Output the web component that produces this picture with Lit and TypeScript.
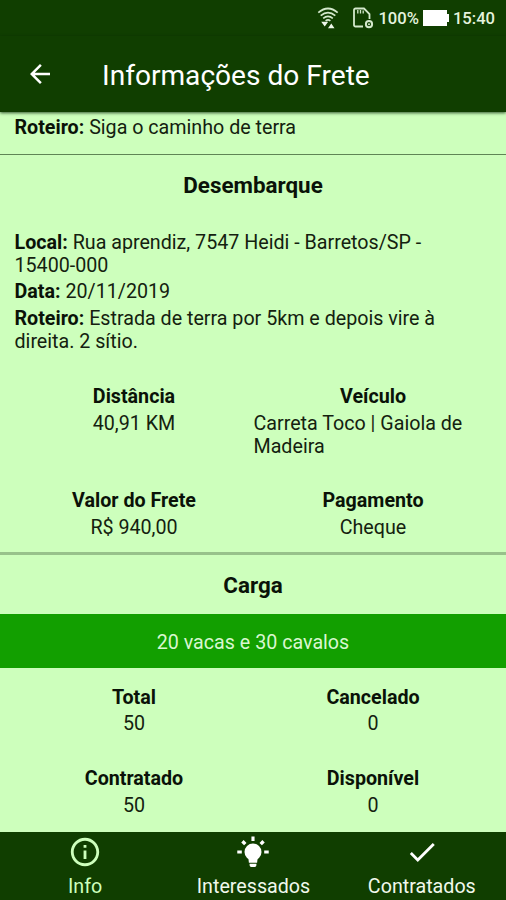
import { LitElement, html, css, svg } from "lit";
import { customElement } from "lit/decorators.js";

interface Fact {
  title: string;
  value: string;
}

const TRIP: Fact[] = [
  { title: "Distância", value: "40,91 KM" },
  { title: "Veículo", value: "Carreta Toco | Gaiola de Madeira" },
  { title: "Valor do Frete", value: "R$ 940,00" },
  { title: "Pagamento", value: "Cheque" },
];

const CARGO: Fact[] = [
  { title: "Total", value: "50" },
  { title: "Cancelado", value: "0" },
  { title: "Contratado", value: "50" },
  { title: "Disponível", value: "0" },
];

const infoIcon = svg`<path d="M11 17h2v-6h-2v6zm1-15C6.48 2 2 6.48 2 12s4.48 10 10 10 10-4.48 10-10S17.52 2 12 2zm0 18c-4.41 0-8-3.59-8-8s3.59-8 8-8 8 3.59 8 8-3.59 8-8 8zM11 9h2V7h-2v2z"/>`;
const bulbIcon = svg`<circle cx="12" cy="12" r="6"/><path d="M8.6 15h6.8l-.5 4.500H9.100zM9.600 20.300h4.800v1.100a1.200 1.200 0 0 1-1.200 1.200h-2.400a1.200 1.200 0 0 1-1.200-1.200zM10.900 1h2.200v3.200h-2.200zM.9 10.900h3.200v2.200H.9zM19.900 10.900h3.200v2.200h-3.200zM3.700 5.300l1.700-1.700 2 2-1.700 1.700zM20.300 5.300l-1.700-1.700-2 2 1.700 1.700z"/>`;
const checkIcon = svg`<path d="M9 16.17L4.83 12l-1.42 1.41L9 19 21 7l-1.41-1.41z"/>`;

const TABS = [
  { label: "Info", icon: infoIcon, active: true },
  { label: "Interessados", icon: bulbIcon, active: false },
  { label: "Contratados", icon: checkIcon, active: false },
];

@customElement("app-root")
export class AppRoot extends LitElement {
  static styles = css`
    :host {
      display: flex;
      flex-direction: column;
      width: 506px;
      height: 900px;
      overflow: hidden;
      background: #cdffbc;
      color: #14210f;
      font: 400 19.68px/23px Roboto, sans-serif;
    }
    svg { display: block; }
    .status {
      display: flex;
      align-items: center;
      justify-content: flex-end;
      height: 36px;
      padding-right: 11px;
      background: #103e00;
      color: #e4f3de;
      font-size: 16.6px;
      font-weight: 500;
    }
    .wifi { margin: 0 13px 0 0; }
    .card { margin-right: 4px; }
    .battery { margin: 0 4px; }
    .bar {
      display: flex;
      align-items: center;
      height: 76px;
      padding: 0 25px;
      gap: 47px;
      background: #103e00;
      color: #fff;
      box-shadow: 0 1px 3px rgba(0, 30, 0, 0.75);
    }
    .title {
      font-size: 28.1px;
      line-height: 32px;
      font-weight: 400;
      margin: 4px 0 0;
    }
    .content { flex: 1; display: flex; flex-direction: column; }
    .para { margin: 0; padding: 0 14.5px; }
    .first { padding-top: 3.5px; height: 23px; margin-bottom: 15px; }
    .place { display: flex; flex-direction: column; gap: 3.6px; padding-top: 15.5px; }
    .zip { white-space: nowrap; }
    b, .name { font-weight: 700; color: #0a1208; }
    .rule { height: 1.5px; background: #5f8555; flex: none; }
    .rule.soft { height: 3px; background: #98c28b; margin-top: 13.2px; }
    .heading {
      display: flex;
      align-items: center;
      justify-content: center;
      height: 60px;
      margin: 0;
      font-size: 22.4px;
      font-weight: 700;
      color: #0a1208;
    }
    .heading.short { box-sizing: border-box; height: 59px; padding-top: 1px; }
    .facts {
      display: grid;
      grid-template-columns: 239px 239px;
      row-gap: 31.4px;
      padding: 32px 14.5px 0;
    }
    .facts.cargo { padding-top: 17.5px; }
    .fact { display: flex; flex-direction: column; align-items: center; gap: 3.9px; }
    .banner {
      display: flex;
      align-items: center;
      justify-content: center;
      height: 54px;
      padding-top: 3px;
      box-sizing: border-box;
      background: #129f00;
      color: #d9f7d0;
    }
    .tabs {
      display: grid;
      grid-template-columns: repeat(3, 1fr);
      height: 68px;
      padding-left: 1px;
      box-sizing: border-box;
      background: #103e00;
      color: #f0f8ec;
    }
    .tab { display: flex; flex-direction: column; align-items: center; padding-top: 3px; gap: 6px; }
    .tab.active { color: #cdffbc; }
    .tab svg { width: 34px; height: 34px; fill: currentColor; }
    .tab:not(.active) svg { fill: #fff; }
  `;

  private facts(items: Fact[], extra = "") {
    return html`<div class="facts ${extra}">
      ${items.map(
        (f) => html`<div class="fact"><span class="name">${f.title}</span><span>${f.value}</span></div>`
      )}
    </div>`;
  }

  render() {
    return html`
      <div class="status">
        <svg class="wifi" width="22" height="24" viewBox="0 0 22 24" fill="none" stroke="#d3e8cb" stroke-width="1.7">
          <path d="M1.300 6.600Q11-1.600 20.700 6.600M3.700 9.600Q11 3.500 18.300 9.600M6.200 12.300Q11 8.400 15.800 12.300M8.600 14.800Q11 12.900 13.400 14.800"/>
          <path d="M4.200 15.800h7l-3.500 4.700zM11 22.300h6.500l-3.200-4.800z" fill="#eef8ea" stroke="none"/>
        </svg>
        <svg class="card" width="22" height="24" viewBox="0 0 22 24" fill="none" stroke="#d3e8cb" stroke-width="1.8">
          <path d="M11 20.500H3.500a1.500 1.500 0 0 1-1.500-1.500V4a1.500 1.500 0 0 1 1.500-1.500H12L17.500 8v5"/>
          <path d="M5.800 4v3.500M8.500 4v3.500M11.200 4.500v3" stroke-width="1.300"/>
          <circle cx="17" cy="18.200" r="3.100" stroke-width="2"/><circle cx="17" cy="18.200" r="1" fill="#d3e8cb" stroke="none"/>
        </svg>
        <span>100%</span>
        <svg class="battery" width="26" height="16" viewBox="0 0 26 16" fill="#fff">
          <path d="M0 0h24v4h2v8h-2v4H0z"/>
        </svg>
        <span>15:40</span>
      </div>
      <header class="bar">
        <svg width="30" height="30" viewBox="0 0 24 24" fill="#fff">
          <path d="M20 11H7.830l5.590-5.590L12 4l-8 8 8 8 1.410-1.410L7.830 13H20v-2z"/>
        </svg>
        <h1 class="title">Informações do Frete</h1>
      </header>
      <main class="content">
        <p class="para first"><b>Roteiro:</b> Siga o caminho de terra</p>
        <div class="rule"></div>
        <h2 class="heading">Desembarque</h2>
        <div class="place">
          <p class="para"><b>Local:</b> Rua aprendiz, 7547 Heidi - Barretos/SP - <span class="zip">15400-000</span></p>
          <p class="para"><b>Data:</b> 20/11/2019</p>
          <p class="para"><b>Roteiro:</b> Estrada de terra por 5km e depois vire à direita. 2 sítio.</p>
        </div>
        ${this.facts(TRIP)}
        <div class="rule soft"></div>
        <h2 class="heading short">Carga</h2>
        <div class="banner">20 vacas e 30 cavalos</div>
        ${this.facts(CARGO, "cargo")}
      </main>
      <nav class="tabs">
        ${TABS.map(
          (t) => html`<div class="tab ${t.active ? "active" : ""}">
            <svg viewBox="0 0 24 24">${t.icon}</svg>
            <span>${t.label}</span>
          </div>`
        )}
      </nav>
    `;
  }
}
